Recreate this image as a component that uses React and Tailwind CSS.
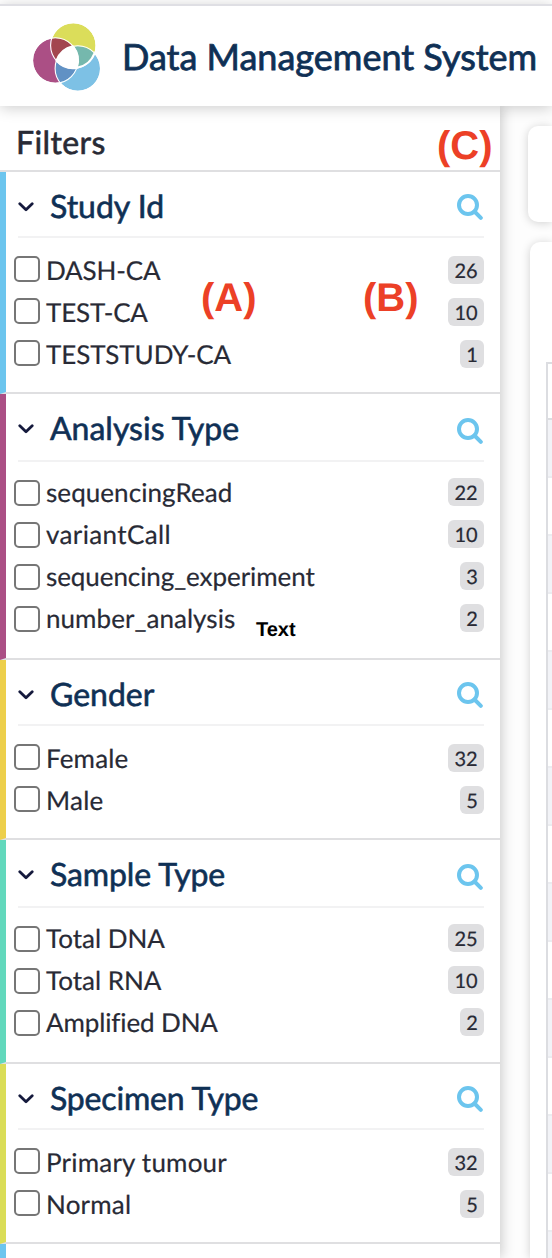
import { Fragment } from 'react';

const sections = [
  { title: 'Study Id', color: 'border-l-[#6cc5ee]', items: [['DASH-CA', 26, 'tracking-[-0.15px]'], ['TEST-CA', 10, 'tracking-[-0.15px]'], ['TESTSTUDY-CA', 1, 'tracking-[-0.1px]']] },
  { title: 'Analysis Type', tall: true, color: 'border-l-[#ab4f85]', items: [['sequencingRead', 22, 'tracking-[0.07px]'], ['variantCall', 10, 'tracking-[0.38px]'], ['sequencing_experiment', 3, 'tracking-[-0.07px]'], ['number_analysis', 2, 'tracking-[0.05px]']] },
  { title: 'Gender', color: 'border-l-[#edcf4b]', items: [['Female', 32, 'tracking-[0.15px]'], ['Male', 5, 'tracking-[0.25px]']] },
  { title: 'Sample Type', tracking: 'tracking-[-0.12px]', tall: true, color: 'border-l-[#62d8bc]', items: [['Total DNA', 25, ''], ['Total RNA', 10, ''], ['Amplified DNA', 2, 'tracking-[-0.12px]']] },
  { title: 'Specimen Type', tracking: 'tracking-[-0.17px]', color: 'border-l-[#dadd57]', items: [['Primary tumour', 32, 'tracking-[0.2px]'], ['Normal', 5, 'tracking-[0.2px]']] },
  { title: '', color: 'border-l-[#6cc5ee]', items: [] },
];

function Logo() {
  return (
    <svg className="ml-8 mt-4 h-[70px] w-[70px] shrink-0" viewBox="32 22 70 70">
      <defs>
        <clipPath id="yellow"><circle cx="73.3" cy="45.5" r="22.5" /></clipPath>
        <clipPath id="blue"><circle cx="77.8" cy="68.5" r="22.5" /></clipPath>
      </defs>
      <circle cx="73.3" cy="45.5" r="22.3" fill="#dbdd5a" />
      <circle cx="55.3" cy="60.5" r="22.3" fill="#ab4f85" />
      <circle cx="77.8" cy="68.5" r="22.3" fill="#7dc1e5" />
      <circle cx="55.3" cy="60.5" r="22.3" fill="#a3464f" clipPath="url(#yellow)" />
      <circle cx="77.8" cy="68.5" r="22.3" fill="#75b8ad" clipPath="url(#yellow)" />
      <circle cx="55.3" cy="60.5" r="22.3" fill="#6191c4" clipPath="url(#blue)" />
      <g fill="none" stroke="#fff" strokeWidth="1.1">
        <circle cx="73.3" cy="45.5" r="22.7" />
        <circle cx="55.3" cy="60.5" r="22.7" />
        <circle cx="77.8" cy="68.5" r="22.7" />
      </g>
      <path d="M76.6 67.8A22.5 22.5 0 0 0 94.4 53.3" fill="none" stroke="#fff" strokeWidth="2" />
      <path d="M72.9 46.5A22.3 22.3 0 0 0 56.7 60.7A22.3 22.3 0 0 0 76.6 67.8A22.3 22.3 0 0 0 72.9 46.5Z" fill="#fff" stroke="#fff" strokeWidth="2.4" strokeLinejoin="round" />
    </svg>
  );
}

function Section({ title, tall, color, items, tracking = '' }) {
  return (
    <section className={`border-b-2 border-l-[6px] border-b-[#dfdfe1] ${color}`}>
      <div className={`ml-3 mr-4 box-content flex items-start border-b-2 border-[#f2f2f3] ${tall ? 'h-[66px]' : 'h-16'}`}>
        <svg className="mt-[29px] h-3 w-4 shrink-0" viewBox="0 0 16 12" fill="none" stroke="#151a3d" strokeWidth="2.8" strokeLinecap="round" strokeLinejoin="round">
          <path d="M1.8 2.8 8 8.8 14.2 2.8" />
        </svg>
        <h2 className={`ml-4 mt-3.5 flex-1 whitespace-nowrap text-[32px] leading-10 text-[#0f3055] [-webkit-text-stroke:0.6px_#0f3055] ${tracking}`}>{title}</h2>
        <svg className={`mr-px h-[26px] w-[26px] shrink-0 ${tall ? 'mt-6' : 'mt-[22px]'}`} viewBox="0 0 26 26" fill="none" stroke="#6cc5ee" strokeWidth="4" strokeLinecap="round">
          <circle cx="11" cy="11" r="9" />
          <path d="m17.5 17.5 6.3 6.3" />
        </svg>
      </div>
      <ul className="mb-2.5 ml-2 mr-4 pt-[18px]">
        {items.map(([name, count, spacing]) => (
          <li key={name} className="flex h-[42px] items-start">
            <span className="h-[26px] w-[26px] shrink-0 rounded-[5px] border-2 border-[#767676] bg-white" />
            <span className={`ml-1.5 flex-1 whitespace-nowrap text-[26px] leading-[30px] [-webkit-text-stroke:0.2px_#282a35] ${spacing} ${tall ? '-mt-[3px]' : '-mt-px'}`}>{name}</span>
            <span className={`h-7 rounded-md bg-[#dfdfe1] text-center text-[20px] leading-[30px] [-webkit-text-stroke:0.2px_#282a35] ${count > 9 ? 'w-9' : 'w-6'} ${tall ? '-mt-0.5' : ''}`}>{count}</span>
          </li>
        ))}
      </ul>
    </section>
  );
}

const rows = Array.from({ length: 16 }, (_, i) => i);

export default function App() {
  return (
    <div className="relative flex h-[1258px] w-[552px] flex-col overflow-hidden bg-white font-['Lato',sans-serif] text-[#282a35] [text-rendering:geometricPrecision]">
      <header className="z-20 mt-1 flex h-[102px] shrink-0 items-start border-t-2 border-[#dfdfe4] bg-white shadow-[0_2px_14px_rgba(0,0,0,0.2)]">
        <Logo />
        <h1 className="ml-5 mt-[26px] whitespace-nowrap text-[36px] leading-[48px] text-[#0f3055] [-webkit-text-stroke:0.8px_#0f3055]">Data Management System</h1>
      </header>
      <div className="flex min-h-0 flex-1">
        <aside className="z-10 w-[500px] shrink-0 bg-white shadow-[2px_0_12px_rgba(0,0,0,0.2)]">
          <div className="h-[66px] border-b-2 border-[#dfdfe1] pl-4 pt-4">
            <h2 className="text-[32px] leading-10 tracking-[0.4px] [-webkit-text-stroke:0.6px_#282a35]">Filters</h2>
          </div>
          {sections.map((s, i) => <Fragment key={i}><Section {...s} /></Fragment>)}
        </aside>
        <main className="flex w-[52px] shrink-0 flex-col bg-[#fdfdfd] pt-5">
          <div className="ml-7 h-24 rounded-l-[10px] bg-white shadow-[0_1px_10px_rgba(0,0,0,0.18)]" />
          <div className="ml-[30px] mt-5 min-h-0 flex-1 rounded-tl-[10px] bg-white pl-4 pt-[120px] shadow-[0_1px_10px_rgba(0,0,0,0.18)]">
            <div className="h-full overflow-hidden border-l-2 border-t-2 border-[#dcdde1]">
              <div className="h-[56px] border-b-2 border-[#dcdde1]" />
              {rows.map((i) => (
                <div key={i} className={`h-[58px] border-b-2 border-[#ebecf0] ${i % 2 ? 'bg-white' : 'bg-[#f2f3f7]'}`} />
              ))}
            </div>
          </div>
        </main>
      </div>
      <div className="z-30 font-['Liberation_Sans',sans-serif] font-bold">
        <span className="absolute left-[201px] top-[276px] text-[40px] leading-[44px] text-[#ec4026]">(A)</span>
        <span className="absolute left-[363px] top-[276px] text-[40px] leading-[44px] text-[#ec4026]">(B)</span>
        <span className="absolute left-[437px] top-[124px] z-30 text-[40px] leading-[44px] text-[#ec4026]">(C)</span>
        <span className="absolute left-[256px] top-[618px] text-[20px] leading-6 text-black">Text</span>
      </div>
    </div>
  );
}
